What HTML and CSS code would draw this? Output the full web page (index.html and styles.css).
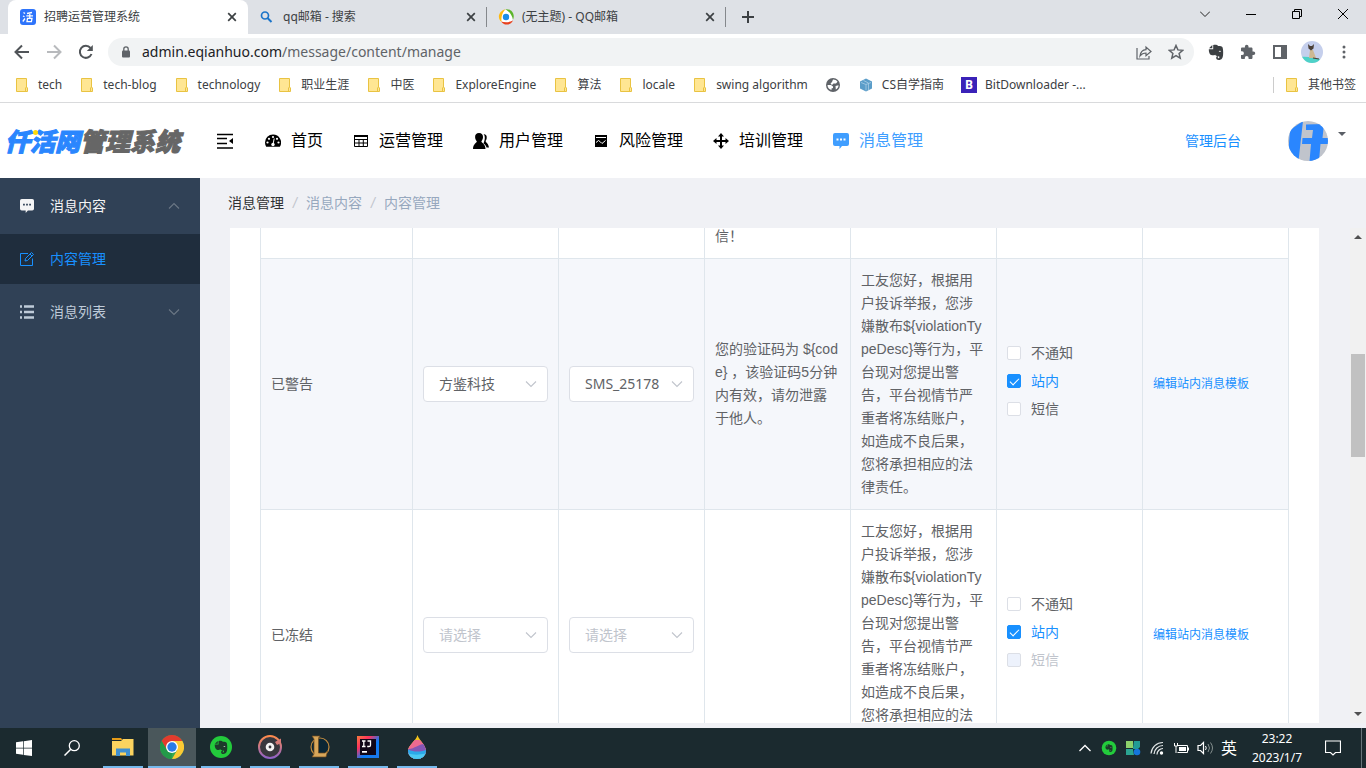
FILE: index.html
```html
<!DOCTYPE html>
<html lang="zh-CN">
<head>
<meta charset="utf-8">
<meta name="viewport" content="width=device-width, initial-scale=1">
<title>招聘运营管理系统</title>
<link rel="stylesheet" href="styles.css">
</head>
<body>
<svg class="defs" aria-hidden="true">
  <symbol id="folder" viewBox="0 0 16 16"><path d="M2.500 1.500h10v8.500l1 1v3.500h-11z" fill="#ffe693" stroke="#e9c342"/><path d="M11.500 14.500v-3.500l1-1" fill="none" stroke="#e9c342"/></symbol>
  <symbol id="x" viewBox="0 0 10 10"><path d="M1.200 1.200l7.600 7.600M8.800 1.200L1.200 8.800" stroke="#3c4043" stroke-width="1.700" fill="none"/></symbol>
  <symbol id="down" viewBox="0 0 12 8"><path d="M1 1.500l5 5 5-5" stroke="currentColor" stroke-width="1.100" fill="none"/></symbol>
  <symbol id="up" viewBox="0 0 12 8"><path d="M1 6.500l5-5 5 5" stroke="currentColor" stroke-width="1.100" fill="none"/></symbol>
  <symbol id="message" viewBox="0 0 16 16"><path fill="currentColor" fill-rule="evenodd" d="M2 0h12a2 2 0 0 1 2 2v9a2 2 0 0 1-2 2H9l-2.500 3v-3H2a2 2 0 0 1-2-2V2a2 2 0 0 1 2-2zM3.500 5.500v2h2v-2zm3.500 0v2h2v-2zm3.500 0v2h2v-2z"/></symbol>
  <symbol id="elephant" viewBox="0 0 16 16"><path fill="currentColor" d="M4.300 1L1 4.300h3.300zM5.200 1v4.200H.8C.7 8 1.600 10.600 3.300 11.100c1.500.4 3.100.2 3.900-.4.700 1.300 1.900 1.200 2.900 1.200 1 0 1.400.6 1.300 1.500-.1.600-.6.900-1.200.8-.6-.1-.6-.9.100-1.100v-1c-1.500 0-2.300.9-2.100 2.100.2 1.200 1.100 1.700 2.500 1.700 3.200 0 4.200-2.100 4.400-5.500.2-2.600 0-5.300-.5-7C14.200 2.400 12.300 2.100 10.200 2 9.500 1 7.500.3 5.200 1z"/><path d="M10.800 7.900c.1-1.500 2-1.400 2.200.2-.8-.4-1.400-.4-2.200-.2z" fill="#f4f4f4"/></symbol>
</svg>

<div class="tabs">
  <div class="tab tab-active">
    <svg class="i16" viewBox="0 0 16 16"><rect width="16" height="16" rx="3" fill="#2e74fb"/><path d="M3.500 3.500l1.500 1M3 7l1.500.8M2.800 12.500L5 9.500M7 4.500l5-1M6.300 6.800h6.700M9.800 4v5M7.500 9.300h4.500l-.6 3.300H7z" stroke="#fff" stroke-width="1.300" fill="none"/></svg>
    <span class="tab-title">招聘运营管理系统</span>
    <button class="bare" aria-label="关闭"><svg class="i10" viewBox="0 0 10 10"><use href="#x"/></svg></button>
  </div>
  <div class="tab">
    <svg class="i16" viewBox="0 0 16 16"><circle cx="6" cy="6.500" r="3.500" stroke="#1b74c9" stroke-width="1.700" fill="none"/><path d="M8.500 9l4 4" stroke="#1b74c9" stroke-width="2"/></svg>
    <span class="tab-title">qq邮箱 - 搜索</span>
    <button class="bare" aria-label="关闭"><svg class="i10" viewBox="0 0 10 10"><use href="#x"/></svg></button>
  </div>
  <div class="tab">
    <svg class="i16" viewBox="0 0 16 16"><circle cx="8" cy="8" r="7" fill="#fff"/><path d="M3.500 13C-.5 10-.5 2.500 7.500.2 5.500 2.500 3 5.500 3.500 13z" fill="#fcb913"/><path d="M7.500.2c6-.8 10 5 7.500 10.500C14 7 12.500 3.500 7.500.2z" fill="#5db52c"/><path d="M15 11.500c-2.500 5-9 5.500-12 1 3.500 1 8 1.200 12-1z" fill="#e8401c"/><circle cx="8" cy="8" r="3.200" fill="#1b8de8"/></svg>
    <span class="tab-title">(无主题) - QQ邮箱</span>
    <button class="bare" aria-label="关闭"><svg class="i10" viewBox="0 0 10 10"><use href="#x"/></svg></button>
  </div>
  <button class="bare new-tab" aria-label="新标签页"><svg class="i12" viewBox="0 0 12 12"><path d="M6 0v12M0 6h12" stroke="#3c4043" stroke-width="2"/></svg></button>
  <div class="window-buttons">
    <button class="bare" aria-label="搜索标签页"><svg class="i10" viewBox="0 0 10 10"><path d="M0 2.500l5 5 5-5" stroke="#222" fill="none"/></svg></button>
    <button class="bare" aria-label="最小化"><svg class="i10" viewBox="0 0 10 10"><path d="M0 5.500h10" stroke="#000"/></svg></button>
    <button class="bare" aria-label="还原"><svg class="i10" viewBox="0 0 10 10"><path d="M.5 2.500h7v7h-7zM2.500 2.500v-2h7v7h-2" stroke="#000" fill="none"/></svg></button>
    <button class="bare" aria-label="关闭窗口"><svg class="i10" viewBox="0 0 10 10"><path d="M0 0l10 10M10 0L0 10" stroke="#000" fill="none"/></svg></button>
  </div>
</div>

<div class="toolbar">
  <div class="tools">
    <button class="bare" aria-label="后退"><svg class="i16" viewBox="0 0 16 16"><path d="M15 8H2M8 1.500L1.500 8 8 14.500" stroke="#505458" stroke-width="2" fill="none"/></svg></button>
    <button class="bare" aria-label="前进"><svg class="i16" viewBox="0 0 16 16"><path d="M1 8h13M8 1.500L14.500 8 8 14.500" stroke="#b8babd" stroke-width="2" fill="none"/></svg></button>
    <button class="bare" aria-label="刷新"><svg class="i16" viewBox="0 0 16 16"><path d="M13.500 10A6 6 0 1 1 12.500 4" stroke="#505458" stroke-width="2" fill="none"/><path d="M14.800 1v6H8.800z" fill="#505458"/></svg></button>
  </div>
  <div class="omnibox">
    <svg class="i12" viewBox="0 0 12 12"><rect x="2" y="4.500" width="8" height="7" rx="1" fill="#5f6368"/><path d="M3.800 5V3a2.200 2.200 0 0 1 4.400 0v2" stroke="#5f6368" stroke-width="1.300" fill="none"/></svg>
    <span class="url"><b>admin.eqianhuo.com</b>/message/content/manage</span>
    <button class="bare" aria-label="分享"><svg class="i16" viewBox="0 0 16 16"><path d="M1 4v11h12v-3M4 12c.5-4 2-6 6-6.300V3l5 4.500-5 4.200V9C7 9 5.500 10 4 12z" stroke="#5f6368" stroke-width="1.200" fill="none"/></svg></button>
    <button class="bare" aria-label="收藏"><svg class="i16" viewBox="0 0 16 16"><path d="M8 1.500l1.900 4.400 4.800.4-3.600 3.200 1.100 4.700L8 11.700l-4.200 2.500 1.100-4.700L1.300 6.300l4.800-.4z" stroke="#5f6368" stroke-width="1.500" fill="none"/></svg></button>
  </div>
  <div class="tools">
    <button class="bare dark" aria-label="印象笔记"><svg class="i16" viewBox="0 0 16 16"><use href="#elephant"/></svg></button>
    <button class="bare" aria-label="扩展程序"><svg class="i16" viewBox="0 0 16 16"><path fill="#5f6368" d="M13.500 7.500h-1V4.800c0-.8-.6-1.300-1.300-1.300H8.500v-1a1.800 1.800 0 0 0-3.600 0v1H2.200C1.500 3.500 1 4 1 4.800v2.500h1a1.900 1.900 0 0 1 0 3.800H1v2.600c0 .8.500 1.300 1.200 1.300h2.600v-1a1.900 1.900 0 0 1 3.800 0v1h2.600c.7 0 1.300-.5 1.300-1.300V11h1a1.700 1.700 0 0 0 0-3.500z"/></svg></button>
    <button class="bare" aria-label="侧边栏"><svg class="i16" viewBox="0 0 16 16"><path fill="#5f6368" fill-rule="evenodd" d="M1 1h14v14H1zm2 2v10h6V3z"/></svg></button>
    <button class="bare" aria-label="个人资料"><svg class="i22" viewBox="0 0 22 22"><clipPath id="round"><circle cx="11" cy="11" r="11"/></clipPath><g clip-path="url(#round)"><path d="M0 0h22v22H0z" fill="#c5cfec"/><path d="M0 16c6-1 14 1 22 3v3H0z" fill="#4ed2c8"/><path d="M9 9h3l1.500 4 1.500 4H8z" fill="#cdb892"/><path d="M7 3l2 2h2l2-2-.5 4.500-2.500 2-2.500-2z" fill="#4a3f36"/><path d="M12 17l6 1" stroke="#4a4038" stroke-width="1.200"/></g></svg></button>
    <button class="bare" aria-label="菜单"><svg class="i16" viewBox="0 0 16 16"><g fill="#5f6368"><circle cx="8" cy="3" r="1.500"/><circle cx="8" cy="8" r="1.500"/><circle cx="8" cy="13" r="1.500"/></g></svg></button>
  </div>
</div>

<nav class="bookmarks">
  <a href="#"><svg class="i16"><use href="#folder"/></svg>tech</a>
  <a href="#"><svg class="i16"><use href="#folder"/></svg>tech-blog</a>
  <a href="#"><svg class="i16"><use href="#folder"/></svg>technology</a>
  <a href="#"><svg class="i16"><use href="#folder"/></svg>职业生涯</a>
  <a href="#"><svg class="i16"><use href="#folder"/></svg>中医</a>
  <a href="#"><svg class="i16"><use href="#folder"/></svg>ExploreEngine</a>
  <a href="#"><svg class="i16"><use href="#folder"/></svg>算法</a>
  <a href="#"><svg class="i16"><use href="#folder"/></svg>locale</a>
  <a href="#"><svg class="i16"><use href="#folder"/></svg>swing algorithm</a>
  <a href="#" aria-label="网站"><svg class="i16" viewBox="0 0 16 16"><circle cx="8" cy="8" r="7" fill="#5f6368"/><path d="M2.500 8h3.500l2 1.500V11l-1.500.5V13C4 12.500 2.500 10.500 2.500 8zM8 2.500c2 0 3.500.8 4.500 2.300L11 6.500H8.500L7 8 5.500 6.500 7 5zM10.500 9l3-.8c0 2-1 3.500-2.700 4.300z" fill="#fff"/></svg></a>
  <a href="#"><svg class="i16" viewBox="0 0 16 16"><path d="M8 1.500l6 3v7l-6 3-6-3v-7z" fill="#5b9dc9"/><path d="M3 5.500l5 2 5-2M8 7.500v6M5.500 3.500l5 2.500v7" stroke="#a9cde4" fill="none" stroke-width=".8"/></svg>CS自学指南</a>
  <a href="#"><span class="b-icon">B</span>BitDownloader -...</a>
  <a href="#" class="other"><svg class="i16"><use href="#folder"/></svg>其他书签</a>
</nav>

<header class="header">
  <a href="#" class="logo"><span class="logo-blue">仟活网</span>管理系统</a>
  <button class="bare fold" aria-label="收起菜单"><svg class="i16" viewBox="0 0 16 16"><path d="M0 1.500h16M0 5.500h10M0 10.500h10M0 15h16" stroke="#000" stroke-width="1.500"/><path d="M16 5v6l-4-3z"/></svg></button>
  <nav class="menu">
    <a href="#"><svg class="i16" viewBox="0 0 16 16"><path d="M8 1.500a8 8 0 0 0-8 8c0 1.600.4 3 1.200 4.300h13.600A8 8 0 0 0 8 1.500z"/><g fill="#fff"><circle cx="2.500" cy="9.500" r="1.100"/><circle cx="4" cy="5.800" r="1.100"/><circle cx="8" cy="4" r="1.100"/><circle cx="12" cy="5.800" r="1.100"/><circle cx="13.500" cy="9.500" r="1.100"/><circle cx="8" cy="11.500" r="1.700"/></g><path d="M8 11.500l1.200-6" stroke="#fff"/></svg>首页</a>
    <a href="#"><svg class="i16" viewBox="0 0 16 16"><path d="M1.500 2.500h13v11h-13zM1.500 6.500h13M1.500 10h13M6 6v7.500M10.300 6v7.500" stroke="#000" fill="none"/><path d="M1 2h14v2H1z"/></svg>运营管理</a>
    <a href="#"><svg class="i16" viewBox="0 0 16 16"><path d="M10.500 1c2.600.3 3.500 2 3.200 4-.1 1.400-.6 2.300-1.200 3 .3 1.500 3 2.500 3.500 6.500h-2.500c-.4-2-1.400-3.100-3-4.100C12 7 12.500 3 10.500 1zM6 0c2.700 0 4.200 1.700 4 4.300C9.900 6 9.200 7.300 8.400 8.300c0 2 4 2.200 4.100 7.700H0c.1-5.500 3.800-5.700 3.800-7.700C2.900 7.300 2.200 6 2.100 4.300 1.900 1.700 3.400 0 6 0z"/></svg>用户管理</a>
    <a href="#"><svg class="i16" viewBox="0 0 16 16"><path d="M2 2h12v12H2z"/><path d="M3 4.500h10" stroke="#fff"/><path d="M3 9.500l2.500-2L7.500 9 9 10.500l3.500-3" stroke="#fff" fill="none"/></svg>风险管理</a>
    <a href="#"><svg class="i16" viewBox="0 0 16 16"><path d="M8 0l3 3.500H9V7h3.500V5L16 8l-3.500 3V9H9v3.500h2L8 16l-3-3.500h2V9H3.500v2L0 8l3.500-3v2H7V3.500H5z"/></svg>培训管理</a>
    <a href="#" class="current"><svg class="i16"><use href="#message"/></svg>消息管理</a>
  </nav>
  <a href="#" class="console">管理后台</a>
  <button class="bare account" aria-label="账户">
    <svg class="i40" viewBox="0 0 40 40"><clipPath id="face"><circle cx="20" cy="20" r="20"/></clipPath><g clip-path="url(#face)"><path d="M0 0h40v40H0z" fill="#c0c4cc"/><path d="M2 9L15 0l-4.500 40L0 35zM18 3.500l18-.5-1.500 14H40v6h-7.500L31 40H21.500L23 23h-9l.5-6H24l1-8h-7z" fill="#2a86fe"/></g></svg>
    <svg class="caret" viewBox="0 0 8 4"><path d="M0 0h8L4 4z" fill="#5a5e66"/></svg>
  </button>
</header>

<div class="app">
  <aside class="sidebar">
    <a href="#" class="side-item opened"><svg class="i14" viewBox="0 0 16 16"><use href="#message"/></svg><span>消息内容</span><svg class="arrow" viewBox="0 0 12 8"><use href="#up"/></svg></a>
    <a href="#" class="side-item sub"><svg class="i14" viewBox="0 0 14 14"><path d="M8 1.500H.5v12h12V6.500M5 9l.5-2.500 6-6 2 2-6 6zM10 2l2 2" stroke="currentColor" fill="none"/></svg><span>内容管理</span></a>
    <a href="#" class="side-item"><svg class="i14" viewBox="0 0 14 14"><path d="M4 1.500h10M4 7h10M4 12.500h10M0 1.500h2M0 7h2M0 12.500h2" stroke="currentColor" stroke-width="2.400"/></svg><span>消息列表</span><svg class="arrow" viewBox="0 0 12 8"><use href="#down"/></svg></a>
  </aside>
  <main class="main">
    <nav class="crumbs"><a href="#">消息管理</a><i>/</i><span>消息内容</span><i>/</i><span>内容管理</span></nav>
    <div class="viewport">
      <section class="card">
        <table class="grid">
          <colgroup><col class="col-name"><col><col><col><col><col><col></colgroup>
          <tbody>
          <tr class="clipped"><td></td><td></td><td></td><td>信！</td><td></td><td></td><td></td></tr>
          <tr class="striped">
            <td>已警告</td>
            <td><div class="picker"><select aria-label="签名"><option>方鉴科技</option></select><svg viewBox="0 0 12 8"><use href="#down"/></svg></div></td>
            <td><div class="picker"><select aria-label="短信模板"><option>SMS_25178</option></select><svg viewBox="0 0 12 8"><use href="#down"/></svg></div></td>
            <td>您的验证码为 ${code} ，该验证码5分钟内有效，请勿泄露于他人。</td>
            <td>工友您好，根据用户投诉举报，您涉嫌散布${violationTypeDesc}等行为，平台现对您提出警告，平台视情节严重者将冻结账户，如造成不良后果，您将承担相应的法律责任。</td>
            <td><div class="checks"><label><input type="checkbox"><span>不通知</span></label><label><input type="checkbox" checked><span>站内</span></label><label><input type="checkbox"><span>短信</span></label></div></td>
            <td><a href="#" class="edit">编辑站内消息模板</a></td>
          </tr>
          <tr>
            <td>已冻结</td>
            <td><div class="picker empty"><select aria-label="签名"><option>请选择</option></select><svg viewBox="0 0 12 8"><use href="#down"/></svg></div></td>
            <td><div class="picker empty"><select aria-label="短信模板"><option>请选择</option></select><svg viewBox="0 0 12 8"><use href="#down"/></svg></div></td>
            <td></td>
            <td>工友您好，根据用户投诉举报，您涉嫌散布${violationTypeDesc}等行为，平台现对您提出警告，平台视情节严重者将冻结账户，如造成不良后果，您将承担相应的法律责任。</td>
            <td><div class="checks"><label><input type="checkbox"><span>不通知</span></label><label><input type="checkbox" checked><span>站内</span></label><label><input type="checkbox" disabled><span>短信</span></label></div></td>
            <td><a href="#" class="edit">编辑站内消息模板</a></td>
          </tr>
          </tbody>
        </table>
      </section>
      <div class="scrollbar">
        <svg class="scroll-arrow" viewBox="0 0 8 4"><path d="M0 4h8L4 0z"/></svg>
        <div class="scroll-track"><div class="thumb"></div></div>
        <svg class="scroll-arrow" viewBox="0 0 8 4"><path d="M0 0h8L4 4z"/></svg>
      </div>
    </div>
  </main>
</div>

<footer class="taskbar">
  <button class="bare sys" aria-label="开始"><svg class="i16" viewBox="0 0 16 16"><path fill="#fff" d="M0 2.300l7-1v6.400H0zM7.700 1.200L16 0v7.700H7.700zM0 8.500h7v6.300l-7-1zM7.700 8.500H16V16l-8.300-1.100z"/></svg></button>
  <button class="bare sys" aria-label="搜索"><svg class="i16" viewBox="0 0 16 16"><circle cx="10.300" cy="5.700" r="5" stroke="#fff" stroke-width="1.300" fill="none"/><path d="M6.800 9.300L.5 15.500" stroke="#fff" stroke-width="1.500"/></svg></button>
  <div class="apps">
    <button class="bare" aria-label="文件资源管理器"><svg class="i24" viewBox="0 0 24 24"><path d="M1 3h9l1.500 2H1z" fill="#e59b18"/><path d="M1 6h9l2-2h10.500v16.500H1z" fill="#fbd35f"/><path d="M5 21v-7.500h14V21h-4v-3.500H9V21z" fill="#3f8fd0"/></svg></button>
    <button class="bare focused" aria-label="Chrome"><svg class="i24" viewBox="0 0 24 24"><circle cx="12" cy="12" r="12" fill="#34a853"/><path d="M12 12L1.600 6A12 12 0 0 1 22.400 6z" fill="#e33b2e"/><path d="M12 6h10.400A12 12 0 0 1 12 24l5.200-9z" fill="#fcc934"/><path d="M1.600 6L7 15l5-3V6z" fill="#e33b2e"/><path d="M1.600 6l5.200 9 5.200 3-.5 6A12 12 0 0 1 1.600 6z" fill="#239a49"/><circle cx="12" cy="12" r="6" fill="#fff"/><circle cx="12" cy="12" r="4.700" fill="#297be8"/></svg></button>
    <button class="bare" aria-label="印象笔记"><svg class="i24 ink" viewBox="0 0 24 24"><circle cx="12" cy="12" r="11" fill="#23cb3c"/><use href="#elephant" x="5" y="5" width="14" height="14"/></svg></button>
    <button class="bare" aria-label="音乐"><svg class="i24" viewBox="0 0 24 24"><defs><linearGradient id="ring" x1="0" y1="0" x2="0" y2="1"><stop stop-color="#ff8b4b"/><stop offset="1" stop-color="#8f62c8"/></linearGradient></defs><circle cx="12" cy="12" r="11" fill="#38373d" stroke="url(#ring)" stroke-width="2"/><circle cx="12" cy="12" r="4.300" fill="#f3f3f3"/><circle cx="12" cy="12" r="1.400" fill="#38373d"/><path d="M17 7l6-3.500v4.500l-4 2z" fill="#d77b78"/></svg></button>
    <button class="bare" aria-label="英雄联盟"><svg class="i24" viewBox="0 0 24 24"><circle cx="13" cy="12" r="9" fill="#0b2634" stroke="#c18b3f" stroke-width="1.200"/><path d="M5 1h8l-1.500 2v15H18l2.500-2-1.500 6H5l2-3V4z" fill="#d9a75a" stroke="#6f491e" stroke-width=".7"/></svg></button>
    <button class="bare" aria-label="IntelliJ IDEA"><svg class="i24" viewBox="0 0 24 24"><defs><linearGradient id="idea" x1="0" y1="0" x2="1" y2="1"><stop stop-color="#f97a3d"/><stop offset=".3" stop-color="#fe315d"/><stop offset=".6" stop-color="#087cfa"/><stop offset="1" stop-color="#2178e8"/></linearGradient></defs><path d="M1 1h22v22H1z" fill="url(#idea)"/><path d="M4 4h16v16H4z" fill="#100718"/><path d="M6 6h3.500M7.800 6v5.500M6 11.500h3.500M11.500 6h3v4.300q0 1.200-1.500 1.200h-1.800" stroke="#fff" stroke-width="1.300" fill="none"/><path d="M6 16h5v1.700H6z" fill="#fff"/></svg></button>
    <button class="bare" aria-label="画图"><svg class="i24" viewBox="0 0 24 24"><clipPath id="drop"><path d="M12.500 0C14 5 21 10 21 16a9 8 0 0 1-18 0C3 10 11 6 12.500 0z"/></clipPath><g clip-path="url(#drop)"><path d="M0 0h24v24H0z" fill="#f2c21c"/><path d="M0 9c8-6 14-4 24-2v17H0z" fill="#ed6a91"/><path d="M0 13c8 4 13-6 24-4v15H0z" fill="#8656b5"/><path d="M0 13c8 4 13 5 24 1v10H0z" fill="#2ba9e9"/><path d="M0 17c8 4 14 3 24 1v8H0z" fill="#4cc9f3"/></g></svg></button>
  </div>
  <div class="tray">
    <svg class="i16" viewBox="0 0 16 16"><path d="M2.500 11L8 5.500l5.500 5.500" stroke="#fff" stroke-width="1.300" fill="none"/></svg>
    <svg class="i16 ink" viewBox="0 0 16 16"><circle cx="8" cy="8" r="7.300" fill="#23cb3c"/><use href="#elephant" x="4" y="4" width="8" height="8"/></svg>
    <svg class="i16" viewBox="0 0 16 16"><path d="M1 1h7v7H1z" fill="#8dd16b"/><path d="M9 1h6v6l-2 2H8V8z" fill="#239c94"/><path d="M1 9h7v1l1 5H1z" fill="#2ba491"/><circle cx="12" cy="12" r="3.300" fill="#1475dc"/></svg>
    <svg class="i16" viewBox="0 0 16 16"><path d="M2 13.500A12 12 0 0 1 14 2.500M5 14a9 9 0 0 1 9-8.500M8 14.500a6 6 0 0 1 6-6" stroke="#e4e8e9" stroke-width="1.200" fill="none"/><circle cx="12.500" cy="13" r="1.700" fill="#fff"/></svg>
    <svg class="i16" viewBox="0 0 16 16"><path d="M5 5.500h9.500v7H4.500M15.500 7.500v3M1.500 3v3h3V3M3 6v7" stroke="#fff" fill="none"/><path d="M6 7h7v4H6z" fill="#fff"/></svg>
    <svg class="i16" viewBox="0 0 16 16"><path d="M1 5.500h2.500l3-3v11l-3-3H1z" stroke="#fff" stroke-width="1.200" fill="none"/><path d="M8.500 6q1.500 2 0 4" stroke="#fff" fill="none"/><path d="M11 4q3 4 0 8M13.500 2.500q4 5.500 0 11" stroke="#86908f" fill="none"/></svg>
    <span class="ime">英</span>
  </div>
  <div class="clock"><span>23:22</span><span>2023/1/7</span></div>
  <button class="bare notice" aria-label="通知"><svg class="i16" viewBox="0 0 16 16"><path d="M.5 1h15v11.500h-5L8 15l-2.500-2.500h-5z" stroke="#fff" stroke-width="1.200" fill="none"/></svg></button>
</footer>
</body>
</html>
```
FILE: styles.css
```css
* { box-sizing: border-box; }
body { margin: 0; height: 100vh; display: flex; flex-direction: column; overflow: hidden; font: 14px/20px "Liberation Sans", "Noto Sans CJK SC", sans-serif; color: #606266; background: #fff; }
a { text-decoration: none; color: inherit; }
svg { display: block; flex: none; fill: #000; }
.defs { width: 0; height: 0; position: absolute; }
.bare { border: 0; padding: 0; background: none; display: flex; align-items: center; justify-content: center; font: inherit; color: inherit; }
.i10 { width: 10px; height: 10px; }
.i12 { width: 12px; height: 12px; }
.i14 { width: 14px; height: 14px; }
.i16 { width: 16px; height: 16px; }
.i22 { width: 22px; height: 22px; }
.i24 { width: 24px; height: 24px; }
.i40 { width: 40px; height: 40px; }
.dark { color: #3c4043; }
.ink { color: #1d3a2b; }

/* browser tabs */
.tabs { flex: none; height: 34px; background: #dee1e6; display: flex; padding-left: 8px; font: 12px/16px "Noto Sans", "Noto Sans CJK SC", sans-serif; color: #3c4043; }
.tab { width: 239px; display: flex; align-items: center; gap: 8px; padding: 0 11px; position: relative; }
.tab-active { width: 240px; background: #fff; border-radius: 8px 8px 0 0; padding: 0 11px 0 12px; }
.tab:not(.tab-active)::after { content: ""; position: absolute; right: 0; top: 7px; width: 1px; height: 20px; background: #85888c; }
.tab-title { flex: 1; }
.new-tab { width: 44px; }
.window-buttons { margin-left: auto; display: flex; height: 28px; }
.window-buttons .bare { width: 46px; }

/* address bar */
.toolbar { flex: none; height: 36px; display: flex; align-items: center; padding: 0 6px; }
.tools { display: flex; }
.tools .bare { width: 32px; height: 28px; }
.omnibox { flex: 1; height: 28px; border-radius: 14px; background: #f1f3f4; margin: 0 6px; padding: 0 10px 0 12px; display: flex; align-items: center; gap: 10px; font: 14px/20px "Noto Sans", sans-serif; color: #5f6368; }
.omnibox .bare { width: 16px; margin-left: 6px; }
.url { flex: 1; }
.url b { font-weight: 400; color: #202124; }

.bookmarks { flex: none; height: 33px; border-bottom: 1px solid #d9dadc; padding: 0 10px 2px 14px; display: flex; align-items: center; gap: 17px; font: 12px/16px "Noto Sans", "Noto Sans CJK SC", sans-serif; color: #3c4043; white-space: nowrap; }
.bookmarks a { display: flex; align-items: center; gap: 8px; }
.b-icon { width: 16px; height: 16px; background: #3a22b8; color: #fff; font-weight: 700; text-align: center; }
.bookmarks .other { margin-left: auto; border-left: 1px solid #ccc; padding-left: 10px; }

/* site header */
.header { flex: none; height: 75px; display: flex; align-items: center; padding-right: 20px; white-space: nowrap; }
.logo { width: 217px; padding: 2px 0 0 5px; font-size: 25px; line-height: 32px; font-weight: 900; font-style: italic; color: #666; position: relative; -webkit-text-stroke: 1px currentColor; }
.logo-blue { color: #2a86fe; }
.logo::after { content: ""; position: absolute; left: 33px; top: 6px; width: 5px; height: 5px; border-radius: 3px; background: #fdd90b; }
.menu { display: flex; gap: 30px; margin-left: 32px; font-size: 16px; line-height: 24px; color: #000; }
.menu a { display: flex; align-items: center; gap: 10px; }
.menu .current { color: #409eff; }
.console { margin-left: auto; color: #1890ff; }
.account { margin-left: 47px; gap: 10px; align-items: flex-start; }
.caret { width: 8px; height: 4px; margin-top: 11px; }

.app { flex: 1; min-height: 0; display: flex; }
.sidebar { width: 200px; flex: none; background: #304156; color: #bfcbd9; }
.side-item { height: 56px; padding: 0 20px; display: flex; align-items: center; gap: 16px; }
.side-item span { flex: 1; }
.side-item.sub { height: 50px; background: #1f2d3d; color: #1890ff; }
.side-item.opened { color: #f4f4f5; }
.arrow { width: 12px; height: 8px; color: #6b7785; }

.main { flex: 1; min-width: 0; display: flex; flex-direction: column; background: #f0f1f5; padding-bottom: 5px; }
.crumbs { flex: none; height: 50px; padding-left: 28px; display: flex; align-items: center; color: #97a8be; }
.crumbs a { color: #303133; }
.crumbs i { width: 22px; text-align: center; color: #c0c4cc; }
.viewport { flex: 1; min-height: 0; display: flex; padding-left: 30px; overflow: hidden; }
.card { flex: 1; background: #fff; padding: 0 30px; overflow: hidden; }
.scrollbar { width: 16px; margin-left: 31px; background: #f1f1f1; display: flex; flex-direction: column; align-items: center; padding: 7px 0; }
.scroll-arrow { width: 8px; height: 4px; fill: #505050; }
.scroll-track { flex: 1; width: 14px; padding-top: 115px; }
.thumb { height: 103px; background: #c1c1c1; }

/* message table */
.grid { width: 100%; margin-top: -13px; table-layout: fixed; border-collapse: separate; border-spacing: 0; border-left: 1px solid #dfe6ec; line-height: 23px; }
.col-name { width: 152px; }
.grid td { padding: 10px; border-right: 1px solid #dfe6ec; border-bottom: 1px solid #dfe6ec; word-break: break-all; vertical-align: middle; }
.striped td { background: #f5f7fb; }
.picker { position: relative; }
.picker select { display: block; width: 100%; height: 36px; appearance: none; border: 1px solid #dcdfe6; border-radius: 4px; background: #fff; padding: 0 30px 0 15px; font: 14px/20px "Noto Sans", "Noto Sans CJK SC", sans-serif; color: #606266; }
.picker svg { position: absolute; right: 11px; top: 14px; width: 12px; height: 8px; color: #c0c4cc; pointer-events: none; }
.picker.empty select { color: #c0c4cc; }
.checks { display: flex; flex-direction: column; padding-bottom: 6px; }
.checks label { display: flex; align-items: center; gap: 10px; height: 28px; }
.checks input { appearance: none; width: 14px; height: 14px; margin: 0; border: 1px solid #dcdfe6; border-radius: 2px; background: #fff; display: flex; justify-content: center; }
.checks input:checked { background: #1890ff; border-color: #1890ff; }
.checks input:checked::after { content: ""; width: 4px; height: 8px; margin-top: 1px; border: solid #fff; border-width: 0 1px 1px 0; transform: rotate(45deg); }
.checks input:checked + span { color: #1890ff; }
.checks input:disabled { background: #edf2fc; }
.checks input:disabled + span { color: #c0c4cc; }
.edit { font-size: 12px; color: #1890ff; }

/* desktop taskbar */
.taskbar { flex: none; height: 40px; background: #1b2a2f; color: #fff; display: flex; font: 12px/19px "Noto Sans", "Noto Sans CJK SC", sans-serif; }
.sys { width: 48px; }
.apps { display: flex; gap: 9px; padding-left: 7px; }
.apps .bare { width: 40px; border-bottom: 2px solid #76b9ed; }
.apps .focused { width: 48px; margin: 0 -4px; background: #4a575b; }
.tray { margin-left: auto; display: flex; align-items: center; gap: 8px; }
.ime { font-size: 16px; }
.clock { width: 80px; display: flex; flex-direction: column; align-items: center; justify-content: center; }
.notice { width: 45px; margin-right: 4px; border-right: 1px solid #66757a; padding-right: 20px; padding-left: 8px; }
```
